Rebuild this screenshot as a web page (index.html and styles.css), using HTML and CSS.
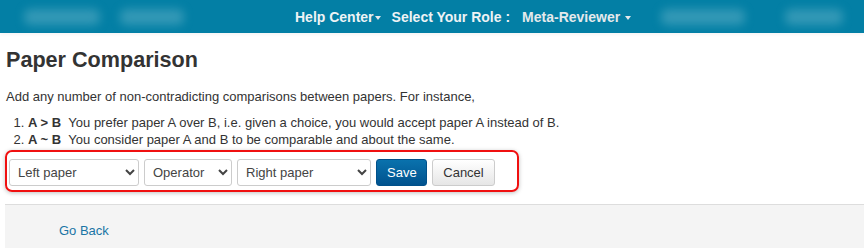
FILE: index.html
```html
<!DOCTYPE html>
<html lang="en">
<head>
  <meta charset="UTF-8">
  <title>Paper Comparison</title>
  <link rel="stylesheet" href="styles.css">
</head>
<body>
  <nav class="navbar">
    <div class="nav-left">
      <span class="blur blur-a"></span>
      <span class="blur blur-b"></span>
    </div>
    <div class="nav-center">
      <span class="nav-item">Help Center<span class="caret"></span></span>
      <span class="nav-item">Select Your Role :</span>
      <span class="nav-item role">Meta-Reviewer <span class="caret"></span></span>
    </div>
    <div class="nav-right">
      <span class="blur blur-c"></span>
      <span class="blur blur-d"></span>
    </div>
  </nav>

  <div class="content">
    <h1 class="page-title">Paper Comparison</h1>
    <p class="intro">Add any number of non-contradicting comparisons between papers. For instance,</p>
    <ol class="rules">
      <li><b>A &gt; B</b>&nbsp;&nbsp;You prefer paper A over B, i.e. given a choice, you would accept paper A instead of B.</li>
      <li><b>A ~ B</b>&nbsp;&nbsp;You consider paper A and B to be comparable and about the same.</li>
    </ol>

    <form class="compare-form">
      <select class="form-select sel-left">
        <option>Left paper</option>
      </select>
      <select class="form-select sel-op">
        <option>Operator</option>
      </select>
      <select class="form-select sel-right">
        <option>Right paper</option>
      </select>
      <button type="button" class="btn btn-save">Save</button>
      <button type="button" class="btn btn-cancel">Cancel</button>
    </form>
  </div>

  <div class="footer">
    <a href="#" class="back-link">Go Back</a>
  </div>
</body>
</html>
```

FILE: styles.css
```css
/* Page styles */
body {
  margin: 0;
  font-family: 'Liberation Sans', Arial, sans-serif;
  font-size: 13px;
  color: #333;
  background: #fff;
}

.navbar {
  height: 33px;
  background-color: #037fa5;
  display: flex;
  align-items: center;
  overflow: hidden;
  box-shadow: 0 2px 3px rgba(0, 0, 0, 0.04);
}

.nav-left {
  display: flex;
  gap: 20px;
  padding-left: 24px;
  width: 271px;
}

.nav-center {
  display: flex;
  align-items: center;
  gap: 11px;
  font-weight: 700;
  font-size: 14px;
  color: #eef3f5;
}

.nav-item.role {
  margin-left: 1px;
  color: #e4e9ec;
}

.caret {
  display: inline-block;
  width: 0;
  height: 0;
  margin-left: 1px;
  vertical-align: middle;
  border-top: 4px solid #e4e9ec;
  border-left: 3px solid transparent;
  border-right: 3px solid transparent;
}

.nav-right {
  display: flex;
  gap: 40px;
  margin-left: 30px;
}

.blur {
  display: block;
  height: 16px;
  background: rgba(140, 200, 215, 0.35);
  border-radius: 6px;
  filter: blur(5px);
}

.blur-a { width: 76px; }
.blur-b { width: 64px; }
.blur-c { width: 84px; }
.blur-d { width: 58px; }

.content {
  padding: 0 6px;
}

.page-title {
  margin: 14px 0 0;
  font-size: 21.6px;
  line-height: 26px;
  font-weight: 700;
  color: #333;
}

.intro {
  margin: 15px 0 0;
  line-height: 17px;
}

.rules {
  margin: 9px 0 0;
  padding-left: 22px;
  line-height: 17px;
}

.compare-form {
  display: flex;
  align-items: center;
  gap: 5px;
  width: 508px;
  margin: 2px 0 0 -1px;
  padding: 7px 0 4px 2px;
  border: 2px solid #f01010;
  border-radius: 7px;
  box-shadow: 0 1px 4px rgba(0, 0, 0, 0.25);
}

.form-select {
  height: 27px;
  padding: 0 4px;
  font-family: inherit;
  font-size: 13px;
  color: #444;
  background: #fff;
  border: 1px solid #ccc;
  border-radius: 3px;
}

.sel-left { width: 130px; }
.sel-op { width: 88px; }
.sel-right { width: 134px; }

.btn {
  height: 27px;
  padding: 0 10px;
  font-family: inherit;
  font-size: 13px;
  border-radius: 3px;
  cursor: pointer;
}

.btn-save {
  width: 51px;
  color: #fff;
  border: 1px solid #00508a;
  background: linear-gradient(#0a72ad, #00528e);
}

.btn-cancel {
  width: 63px;
  color: #333;
  border: 1px solid #ccc;
  background: linear-gradient(#fff, #e6e6e6);
}

.footer {
  box-sizing: border-box;
  margin: 12px 0 0 5px;
  height: 44px;
  background: #f4f4f4;
  border-top: 1px solid #ddd;
  padding: 18px 0 0 54px;
}

.back-link {
  color: #1a75a5;
  text-decoration: none;
}
```
